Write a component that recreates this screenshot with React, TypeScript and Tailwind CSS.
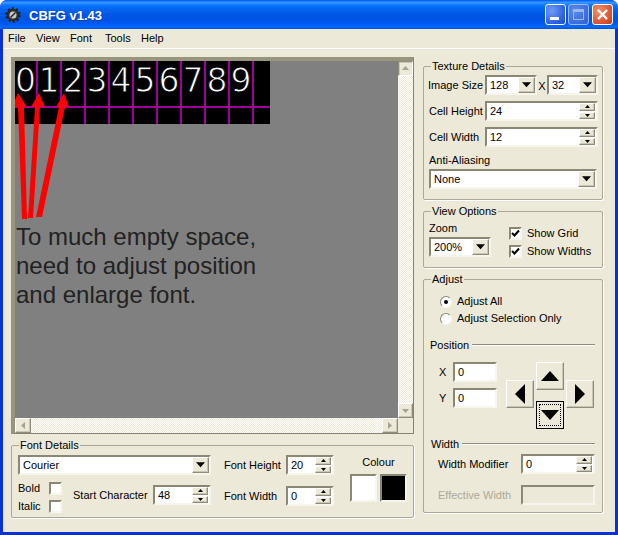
import React from "react";

const Down = ({ s = 9 }: { s?: number }) => (
  <svg width={s} height={Math.ceil(s / 2) + 1} viewBox="0 0 8 5"><polygon points="0,0 8,0 4,4.5" fill="#000" /></svg>
);

const btn = "bg-[#ece9d8] border border-t-white border-l-white border-r-[#8f8c7b] border-b-[#8f8c7b] shadow-[inset_-1px_-1px_0_#c9c6b4]";

const Field = ({ v, w, h = 20, children, className = "" }: { v: string; w: number; h?: number; children?: React.ReactNode; className?: string }) => (
  <div className={`shrink-0 flex items-center bg-white border-2 border-t-[#8a8775] border-l-[#8a8775] border-r-[#f6f5ee] border-b-[#f6f5ee] pl-[3px] ${className}`} style={{ width: w, height: h }}>
    <span className="flex-1 leading-none">{v}</span>
    {children}
  </div>
);

const Combo = ({ v, w }: { v: string; w: number }) => (
  <Field v={v} w={w}>
    <div className={`${btn} w-[17px] h-[16px] flex items-center justify-center`}><Down /></div>
  </Field>
);

const Spin = ({ v, w, h = 20 }: { v: string; w: number; h?: number }) => (
  <Field v={v} w={w} h={h}>
    <div className="w-[16px] h-full flex flex-col justify-center gap-px mr-[1px]">
      <div className={`${btn} h-[8px] flex items-center justify-center`}><svg width="5" height="3"><polygon points="0,3 5,3 2.5,0" fill="#000" /></svg></div>
      <div className={`${btn} h-[8px] flex items-center justify-center`}><svg width="5" height="3"><polygon points="0,0 5,0 2.5,3" fill="#000" /></svg></div>
    </div>
  </Field>
);

const Check = ({ on = false }: { on?: boolean }) => (
  <div className="w-[13px] h-[13px] shrink-0 bg-white border-2 border-t-[#8a8775] border-l-[#8a8775] border-r-[#f6f5ee] border-b-[#f6f5ee] flex items-center justify-center">
    {on && <svg width="9" height="9" viewBox="0 0 9 9" className="shrink-0"><path d="M1 4l2.5 2.5L8 1.5" fill="none" stroke="#000" strokeWidth="2" /></svg>}
  </div>
);

const Radio = ({ on = false }: { on?: boolean }) => (
  <div className="w-[12px] h-[12px] shrink-0 rounded-full bg-white border border-t-[#8a8775] border-l-[#8a8775] border-r-[#f6f5ee] border-b-[#f6f5ee] flex items-center justify-center">
    {on && <div className="w-[4px] h-[4px] rounded-full bg-black" />}
  </div>
);

const Group = ({ title, className = "", children }: { title: string; className?: string; children: React.ReactNode }) => (
  <fieldset className={`border border-[#aca899] rounded-[2px] shadow-[1px_1px_0_#fff] ${className}`}>
    <legend className="ml-[7px] px-[1px] h-[13px] leading-[13px] bg-[#ece9d8]">{title}</legend>
    {children}
  </fieldset>
);

const Divider = ({ title, ml }: { title: string; ml: number }) => (
  <div className="flex items-center h-[14px]" style={{ marginLeft: ml }}>
    <span className="leading-none">{title}</span>
    <div className="flex-1 h-[2px] bg-[#8f8c7b] border-b border-[#fff] ml-[3px]" />
  </div>
);

const Arrow = ({ dir, focus }: { dir: "up" | "down" | "left" | "right"; focus?: boolean }) => {
  const pts = { up: "9,0 18,10 0,10", down: "0,0 18,0 9,10", left: "10,0 10,20 0,10", right: "0,0 0,20 10,10" }[dir];
  const vert = dir === "up" || dir === "down";
  return (
    <div className={`w-[28px] h-[28px] flex items-center justify-center ${focus ? "border border-black p-[2px] bg-[#ece9d8]" : btn}`}>
      <div className={`w-full h-full flex items-center justify-center ${focus ? "border border-dotted border-black" : ""}`}>
        <svg width={vert ? 18 : 10} height={vert ? 10 : 20}><polygon points={pts} fill="#000" /></svg>
      </div>
    </div>
  );
};

const digits = ["0", "1", "2", "3", "4", "5", "6", "7", "8", "9", ""];

const Row = ({ h, text, bottom }: { h: number; text?: boolean; bottom?: boolean }) => (
  <div className={`flex ${bottom ? "border-b-2 border-[#a000a0]" : ""}`} style={{ height: h }}>
    {digits.map((d, i) => (
      <div key={i} className={`shrink-0 flex justify-center text-white ${i === 0 ? "w-[23px]" : "w-[24px]"} ${i < 10 ? "border-r-2 border-[#a000a0]" : ""}`}>
        {text && <span className="[font-family:'DejaVu_Sans',sans-serif] text-[33px] leading-[38px] mt-[1px] [-webkit-text-stroke:1px_#000]">{d}</span>}
      </div>
    ))}
  </div>
);

export default function App() {
  return (
    <div className="w-[618px] h-[535px] flex flex-col overflow-hidden bg-[#0831d9] rounded-t-[7px] text-[11px] text-black whitespace-nowrap [font-family:'Liberation_Sans',Arial,sans-serif]">
      {/* Title bar */}
      <div className="h-[29px] shrink-0 flex items-center pl-[5px] pr-[5px] rounded-t-[7px] bg-[linear-gradient(to_bottom,#0058ee_0%,#3593ff_8%,#288eff_12%,#127dff_16%,#036ffc_22%,#0262ee_36%,#0057e5_50%,#0054e3_64%,#0055eb_76%,#005bf5_84%,#026afe_92%,#0062ef_96%,#0052d6_100%)]">
        <svg width="16" height="16" viewBox="0 0 16 16" className="shrink-0 mr-[8px]">
          <circle cx="8" cy="8" r="6.2" fill="#2b2b2b" stroke="#222" strokeWidth="3" strokeDasharray="2 1.9" />
          <circle cx="8" cy="8" r="5" fill="#333" />
          <circle cx="8" cy="8" r="3.5" fill="#c8c8c8" />
          <path d="M5.5 10.5L10.5 5.5" stroke="#222" strokeWidth="1.5" />
        </svg>
        <span className="text-white font-bold text-[13px] leading-none mt-[2px] [text-shadow:1px_1px_0_#0f3fa8]">CBFG v1.43</span>
        <div className="ml-auto flex gap-[2px]">
          <div className="w-[21px] h-[21px] rounded-[3px] border border-white bg-[radial-gradient(circle_at_30%_30%,#6f9df5,#2a5fe0_70%,#1a47c0)] flex items-end pb-[4px] pl-[4px]">
            <div className="w-[9px] h-[3px] bg-white" />
          </div>
          <div className="w-[21px] h-[21px] rounded-[3px] border border-[#9db8ee] bg-[radial-gradient(circle_at_30%_30%,#5a8aea,#3a6be0_70%,#2f5bd0)] flex items-center justify-center">
            <div className="w-[11px] h-[11px] border border-[#9db8ee] border-t-[3px]" />
          </div>
          <div className="w-[21px] h-[21px] rounded-[3px] border border-white bg-[radial-gradient(circle_at_30%_30%,#f09070,#d9502c_70%,#b83a1a)] ml-[1px] flex items-center justify-center">
            <svg width="11" height="11"><path d="M1 1L10 10M10 1L1 10" stroke="#fff" strokeWidth="2.4" /></svg>
          </div>
        </div>
      </div>

      {/* Client */}
      <div className="flex-1 mx-[3px] mb-[3px] bg-[#ece9d8] flex flex-col min-h-0">
        {/* Menu */}
        <div className="h-[20px] shrink-0 flex items-center pl-[5px] border-b border-white">
          <span className="w-[28px]">File</span><span className="w-[34px]">View</span><span className="w-[35px]">Font</span><span className="w-[36px]">Tools</span><span>Help</span>
        </div>

        <div className="flex-1 flex pt-[8px] pl-[8px] min-h-0">
          {/* Left column */}
          <div className="w-[403px] shrink-0 flex flex-col">
            <div className="h-[377px] flex flex-col border-t-4 border-l-4 border-r border-b border-t-[#98957f] border-l-[#98957f] border-r-[#85826f] border-b-[#85826f]">
              <div className="flex h-[357px]">
                <div className="relative w-[383px] bg-[#808080] overflow-hidden">
                  <div className="w-[255px] h-[63px] bg-black overflow-hidden">
                    <Row h={47} text bottom />
                    <Row h={16} />
                  </div>
                  <div className="mt-[98px] pl-[1px] text-[24px] leading-[29px] text-[#222]">
                    To much empty space,<br />need to adjust position<br />and enlarge font.
                  </div>
                  <svg width="100" height="170" viewBox="0 0 100 170" className="absolute left-0 top-0">
                    <g fill="#f00">
                      <polygon points="3,32 -3,46 3,46 7,158 12,158 9,46 12,46" />
                      <polygon points="24,32 16,46 20,46 13,157 18,157 25,46 30,46" />
                      <polygon points="49,32 41,46 44,46 21,156 27,156 50,46 54,46" />
                    </g>
                  </svg>
                </div>
                <div className="w-[15px] flex flex-col justify-between bg-[repeating-conic-gradient(#fff_0_25%,#ece9d8_0_50%)] bg-size-[2px_2px]">
                  <div className={`${btn} h-[15px] flex items-center justify-center rotate-180`}><svg width="7" height="4"><polygon points="0,0 7,0 3.5,4" fill="#a5a290" /></svg></div>
                  <div className={`${btn} h-[15px] flex items-center justify-center`}><svg width="7" height="4"><polygon points="0,0 7,0 3.5,4" fill="#a5a290" /></svg></div>
                </div>
              </div>
              <div className="flex flex-1">
                <div className="w-[383px] flex justify-between bg-[repeating-conic-gradient(#fff_0_25%,#ece9d8_0_50%)] bg-size-[2px_2px]">
                  <div className={`${btn} w-[16px] flex items-center justify-center`}><svg width="4" height="7"><polygon points="4,0 4,7 0,3.5" fill="#a5a290" /></svg></div>
                  <div className={`${btn} w-[16px] flex items-center justify-center`}><svg width="4" height="7"><polygon points="0,0 0,7 4,3.5" fill="#a5a290" /></svg></div>
                </div>
                <div className="flex-1" />
              </div>
            </div>

            <Group title="Font Details" className="mt-[5px] h-[79px]">
              <div className="flex pl-[6px]">
                <div className="w-[193px] mr-[13px] mt-[3px]">
                  <Combo v="Courier" w={193} />
                  <div className="flex mt-[4px]">
                    <div className="w-[55px]">
                      <div className="flex items-center h-[18px]"><span className="w-[31px]">Bold</span><Check /></div>
                      <div className="flex items-center h-[18px]"><span className="w-[31px]">Italic</span><Check /></div>
                    </div>
                    <div className="flex items-center h-[20px] mt-[6px] flex-1 justify-between">
                      <span>Start Character</span>
                      <Spin v="48" w={58} />
                    </div>
                  </div>
                </div>
                <div className="w-[110px] mt-[3px]">
                  <div className="flex items-center justify-between h-[20px]"><span>Font Height</span><Spin v="20" w={48} /></div>
                  <div className="flex items-center justify-between h-[20px] mt-[11px]"><span>Font Width</span><Spin v="0" w={48} /></div>
                </div>
                <div className="ml-[16px] w-[57px] flex flex-col items-center">
                  <span className="mt-[3px] h-[16px] leading-[14px]">Colour</span>
                  <div className="flex gap-[3px] mt-[3px]">
                    <div className="w-[27px] h-[28px] bg-white border-2 border-t-[#8a8775] border-l-[#8a8775] border-r-[#f6f5ee] border-b-[#f6f5ee]" />
                    <div className="w-[27px] h-[28px] bg-black border-2 border-t-[#8a8775] border-l-[#8a8775] border-r-[#f6f5ee] border-b-[#f6f5ee]" />
                  </div>
                </div>
              </div>
            </Group>
          </div>

          {/* Right column */}
          <div className="w-[180px] ml-[9px] shrink-0 flex flex-col mt-[3px]">
            <Group title="Texture Details" className="h-[140px]">
              <div className="px-[4px]">
                <div className="flex items-center h-[20px] mt-[2px]">
                  <span className="w-[57px]">Image Size</span>
                  <Combo v="128" w={52} />
                  <span className="w-[10px] text-center mt-[3px]">X</span>
                  <Combo v="32" w={51} />
                </div>
                <div className="flex items-center h-[20px] mt-[6px]">
                  <span className="w-[57px] pl-[1px]">Cell Height</span>
                  <Spin v="24" w={113} />
                </div>
                <div className="flex items-center h-[20px] mt-[6px]">
                  <span className="w-[57px] pl-[1px]">Cell Width</span>
                  <Spin v="12" w={113} />
                </div>
                <div className="h-[14px] mt-[6px] ml-[1px] leading-[14px]">Anti-Aliasing</div>
                <div className="mt-[2px] ml-[1px]"><Combo v="None" w={168} /></div>
              </div>
            </Group>

            <Group title="View Options" className="h-[63px] mt-[5px]">
              <div className="flex px-[5px]">
                <div className="w-[80px]">
                  <div className="h-[16px] leading-[14px] mt-[3px]">Zoom</div>
                  <Combo v="200%" w={62} />
                </div>
                <div>
                  <div className="flex items-center gap-[5px] h-[18px] mt-[6px]"><Check on /><span>Show Grid</span></div>
                  <div className="flex items-center gap-[5px] h-[18px]"><Check on /><span>Show Widths</span></div>
                </div>
              </div>
            </Group>

            <Group title="Adjust" className="h-[240px] mt-[5px]">
              <div className="flex items-center gap-[5px] ml-[16px] h-[17px] mt-[7px]"><Radio on /><span>Adjust All</span></div>
              <div className="flex items-center gap-[5px] ml-[16px] h-[17px]"><Radio /><span>Adjust Selection Only</span></div>
              <div className="mt-[11px] mr-[7px]"><Divider title="Position" ml={6} /></div>
              <div className="flex ml-[15px] mt-[10px]">
                <div className="w-[67px]">
                  <div className="flex items-center h-[20px]"><span className="w-[14px]">X</span><Field v="0" w={44} /></div>
                  <div className="flex items-center h-[20px] mt-[6px]"><span className="w-[14px]">Y</span><Field v="0" w={44} /></div>
                </div>
                <div className="flex items-start">
                  <div className="mt-[18px]"><Arrow dir="left" /></div>
                  <div className="flex flex-col ml-[2px] mr-[2px] gap-[11px]">
                    <Arrow dir="up" />
                    <Arrow dir="down" focus />
                  </div>
                  <div className="mt-[18px]"><Arrow dir="right" /></div>
                </div>
              </div>
              <div className="mt-[8px] mr-[7px]"><Divider title="Width" ml={7} /></div>
              <div className="flex items-center ml-[14px] mt-[3px] h-[20px]"><span className="w-[83px]">Width Modifier</span><Spin v="0" w={74} /></div>
              <div className="flex items-center ml-[14px] mt-[11px] h-[20px] text-[#aca899]"><span className="w-[83px]">Effective Width</span>
                <div className="w-[74px] h-[20px] border-2 border-t-[#8a8775] border-l-[#8a8775] border-r-[#f6f5ee] border-b-[#f6f5ee]" />
              </div>
            </Group>
          </div>
        </div>
      </div>
    </div>
  );
}
